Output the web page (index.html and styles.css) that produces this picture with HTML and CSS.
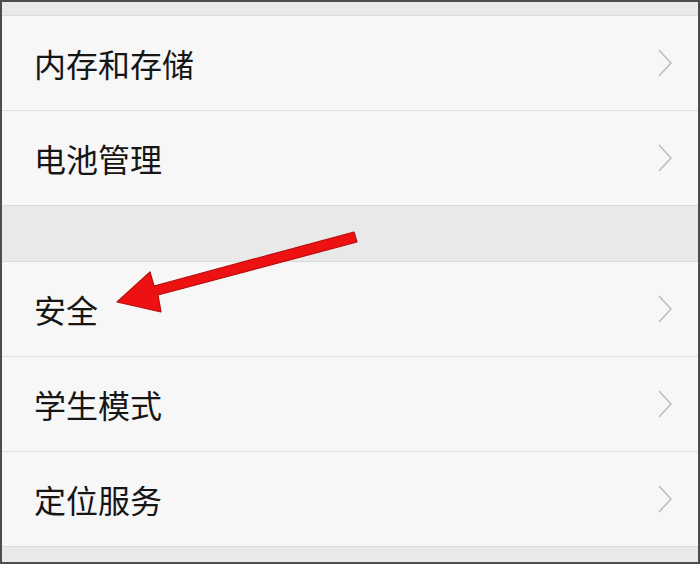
FILE: index.html
```html
<!DOCTYPE html>
<html lang="zh-CN">
<head>
  <meta charset="UTF-8">
  <title>设置</title>
  <link rel="stylesheet" href="styles.css">
</head>
<body>
  <div class="frame">
    <div class="group">
      <div class="row">
        <span class="label">内存和存储</span>
        <svg class="chev" width="14" height="28" viewBox="0 0 14 28"><path d="M1 1 L13 14 L1 27" fill="none" stroke="#bdbdbd" stroke-width="1.6"/></svg>
      </div>
      <div class="row">
        <span class="label">电池管理</span>
        <svg class="chev" width="14" height="28" viewBox="0 0 14 28"><path d="M1 1 L13 14 L1 27" fill="none" stroke="#bdbdbd" stroke-width="1.6"/></svg>
      </div>
    </div>

    <div class="group">
      <div class="row">
        <span class="label">安全</span>
        <svg class="chev" width="14" height="28" viewBox="0 0 14 28"><path d="M1 1 L13 14 L1 27" fill="none" stroke="#bdbdbd" stroke-width="1.6"/></svg>
      </div>
      <div class="row">
        <span class="label">学生模式</span>
        <svg class="chev" width="14" height="28" viewBox="0 0 14 28"><path d="M1 1 L13 14 L1 27" fill="none" stroke="#bdbdbd" stroke-width="1.6"/></svg>
      </div>
      <div class="row">
        <span class="label">定位服务</span>
        <svg class="chev" width="14" height="28" viewBox="0 0 14 28"><path d="M1 1 L13 14 L1 27" fill="none" stroke="#bdbdbd" stroke-width="1.6"/></svg>
      </div>
    </div>

    <!-- red pointer drawn over the list -->
    <svg class="arrow" width="700" height="564" viewBox="0 0 700 564">
      <path d="M354 232 L357 242 L158 295 L161 312 L117 302 L150 272 L154 286 Z" fill="#ee1111" stroke="#b80d0d" stroke-width="1.2" stroke-linejoin="round"/>
    </svg>
  </div>
</body>
</html>
```

FILE: styles.css
```css
html, body {
  margin: 0;
  padding: 0;
}
body {
  font-family: "Noto Sans CJK SC", "Noto Sans", sans-serif;
  background: #e9e9e9;
}
.frame {
  position: relative;
  box-sizing: border-box;
  width: 700px;
  height: 564px;
  border: 2px solid #4d4d4d;
  background: #e9e9e9;
  padding-top: 13px;
  overflow: hidden;
}
.group {
  background: #f7f7f7;
  border-top: 1px solid #dadada;
  border-bottom: 1px solid #dadada;
  margin-bottom: 55px;
}
.row {
  height: 94px;
  display: flex;
  align-items: center;
  justify-content: space-between;
  padding: 0 26px 0 32px;
}
.row + .row {
  border-top: 1px solid #dedede;
}
.label {
  font-size: 32px;
  color: #161616;
}
.chev {
  display: block;
}
.arrow {
  position: absolute;
  left: -2px;
  top: -2px;
}
```
